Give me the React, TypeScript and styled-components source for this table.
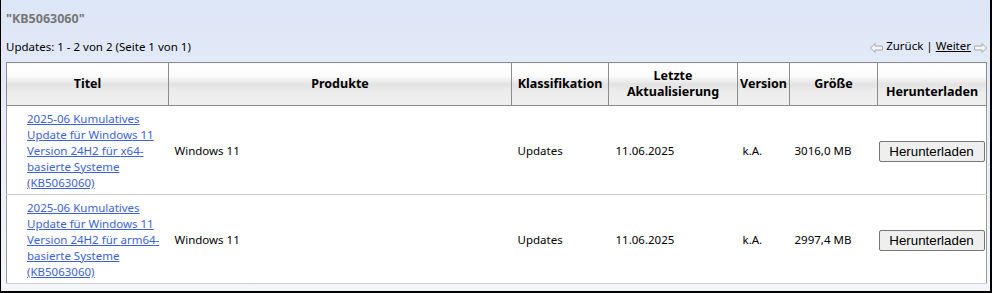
import React from "react";
import styled, { createGlobalStyle } from "styled-components";

const Global = createGlobalStyle`
  html, body { margin: 0; padding: 0; }
  body { font-family: "Noto Sans", "Open Sans", sans-serif; }
`;

const Frame = styled.div`
  box-sizing: border-box;
  width: 992px;
  height: 293px;
  border-left: 1px solid #000;
  border-right: 2px solid #000;
  border-bottom: 2px solid #000;
  background: linear-gradient(to bottom, #dde6f7 0%, #e9eef9 50%, #f4f6fc 100%);
  padding: 10px 5px 0 5px;
  display: flex;
  flex-direction: column;
`;

const SearchTitle = styled.div`
  font-size: 12.5px;
  font-weight: 700;
  color: #777;
  height: 18px;
  line-height: 18px;
`;

const PagerRow = styled.div`
  margin-top: 8px;
  height: 26px;
  display: flex;
  align-items: flex-start;
  justify-content: space-between;
  font-size: 11.5px;
  line-height: 16px;
  color: #000;
  padding-top: 3px;
  box-sizing: border-box;
`;

const Pager = styled.div`
  display: flex;
  align-items: flex-start;
  gap: 3px;
  margin-top: -1px;
  margin-right: -2px;
`;

const PagerLink = styled.a<{ $active?: boolean }>`
  color: #000;
  text-decoration: ${(p) => (p.$active ? "underline" : "none")};
`;

const Table = styled.table`
  width: 980px;
  border-collapse: collapse;
  table-layout: fixed;
  background: #fff;
  font-size: 11.5px;
  border-left: 1px solid #999;
  border-right: 1px solid #999;
`;

const Th = styled.th<{ $w: number; $low?: boolean }>`
  width: ${(p) => p.$w}px;
  height: 43px;
  box-sizing: border-box;
  padding: ${(p) => (p.$low ? "15px 2px 0" : "0 2px")};
  border: 1px solid #8c8c8c;
  font-weight: 700;
  font-size: 12.5px;
  line-height: 16px;
  text-align: center;
  vertical-align: middle;
  color: #000;
  background: linear-gradient(
    to bottom,
    #ffffff 0%,
    #fbfbfb 30%,
    #e3e3e3 50%,
    #ececec 68%,
    #efefef 100%
  );
`;

const Tr = styled.tr`
  height: 89px;
  border-bottom: 1px solid #cfcfcf;
`;

const Td = styled.td<{ $pl?: number }>`
  padding: 2px 4px 0 ${(p) => p.$pl ?? 6}px;
  vertical-align: middle;
  color: #000;
  line-height: 16px;
`;

const TitleLink = styled.a`
  color: #3c62d6;
  text-decoration: underline;
  display: block;
  padding-right: 2px;
`;

const DownloadButton = styled.button`
  font-family: "Liberation Sans", Arial, sans-serif;
  font-size: 13.33px;
  width: 106px;
  height: 21px;
  padding: 0;
  border: 1px solid #767676;
  border-radius: 2px;
  background: #efefef;
  color: #000;
`;

const ArrowSvg = styled.svg<{ $flip?: boolean }>`
  margin-top: 5px;
  transform: ${(p) => (p.$flip ? "scaleX(-1)" : "none")};
`;

const Arrow = ({ flip }: { flip?: boolean }) => (
  <ArrowSvg $flip={flip} width="13" height="10" viewBox="0 0 13 10">
    <path d="M0.5 5 L5 0.5 L5 3 L12.5 3 L12.5 7 L5 7 L5 9.5 Z" fill="#f4f4f4" stroke="#a8a8a8" strokeWidth="1" />
  </ArrowSvg>
);

const rows = [
  { arch: "x64", size: "3016,0 MB" },
  { arch: "arm64", size: "2997,4 MB" },
];

export default function App() {
  return (
    <>
      <Global />
      <Frame>
        <SearchTitle>"KB5063060"</SearchTitle>
        <PagerRow>
          <span>Updates: 1 - 2 von 2 (Seite 1 von 1)</span>
          <Pager>
            <Arrow />
            <PagerLink>Zurück</PagerLink>
            <span>|</span>
            <PagerLink $active href="#">Weiter</PagerLink>
            <Arrow flip />
          </Pager>
        </PagerRow>
        <Table>
          <thead>
            <tr>
              <Th $w={162}>Titel</Th>
              <Th $w={343}>Produkte</Th>
              <Th $w={97}>Klassifikation</Th>
              <Th $w={129}>Letzte<br />Aktualisierung</Th>
              <Th $w={52}>Version</Th>
              <Th $w={88}>Größe</Th>
              <Th $w={109} $low>Herunterladen</Th>
            </tr>
          </thead>
          <tbody>
            {rows.map((r) => (
              <Tr key={r.arch}>
                <Td $pl={20}>
                  <TitleLink href="#">
                    2025-06 Kumulatives Update für Windows 11 Version 24H2 für {r.arch}-basierte Systeme (KB5063060)
                  </TitleLink>
                </Td>
                <Td>Windows 11</Td>
                <Td>Updates</Td>
                <Td $pl={7}>11.06.2025</Td>
                <Td $pl={5}>k.A.</Td>
                <Td $pl={5}>{r.size}</Td>
                <Td $pl={1}>
                  <DownloadButton>Herunterladen</DownloadButton>
                </Td>
              </Tr>
            ))}
          </tbody>
        </Table>
      </Frame>
    </>
  );
}
